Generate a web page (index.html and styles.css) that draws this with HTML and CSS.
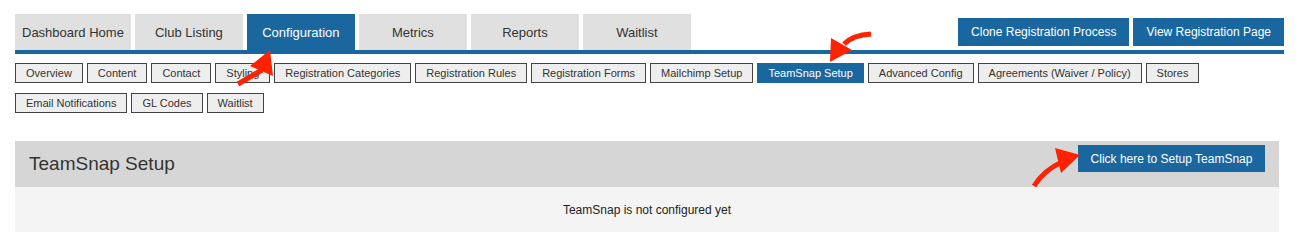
FILE: index.html
```html
<!DOCTYPE html>
<html lang="en">
<head>
    <meta charset="UTF-8">
    <title>TeamSnap Setup</title>
    <link rel="stylesheet" href="styles.css">
</head>
<body>
    <div class="page">
        <div class="topbar">
            <nav class="tabs">
                <a class="tab">Dashboard Home</a>
                <a class="tab">Club Listing</a>
                <a class="tab active">Configuration</a>
                <a class="tab">Metrics</a>
                <a class="tab">Reports</a>
                <a class="tab">Waitlist</a>
            </nav>
            <div class="actions">
                <button class="btn">Clone Registration Process</button>
                <button class="btn">View Registration Page</button>
            </div>
        </div>

        <div class="subtabs">
            <a class="sub">Overview</a>
            <a class="sub">Content</a>
            <a class="sub">Contact</a>
            <a class="sub">Styling</a>
            <a class="sub">Registration Categories</a>
            <a class="sub">Registration Rules</a>
            <a class="sub">Registration Forms</a>
            <a class="sub">Mailchimp Setup</a>
            <a class="sub active">TeamSnap Setup</a>
            <a class="sub">Advanced Config</a>
            <a class="sub">Agreements (Waiver / Policy)</a>
            <a class="sub">Stores</a>
            <a class="sub">Email Notifications</a>
            <a class="sub">GL Codes</a>
            <a class="sub">Waitlist</a>
        </div>

        <section class="panel">
            <div class="panel-head">
                <h2>TeamSnap Setup</h2>
                <button class="btn setup-btn">Click here to Setup TeamSnap</button>
            </div>
            <div class="panel-body">TeamSnap is not configured yet</div>
        </section>

        <!-- annotation arrows drawn over the screenshot -->
        <svg class="arrows" width="1303" height="249" viewBox="0 0 1303 249">
            <g fill="none" stroke="#ff2200" stroke-width="5" stroke-linecap="butt">
                <path d="M238,84 Q250,77 262,70"/>
                <path d="M844,44 Q853,35 871,34"/>
                <path d="M1034,186 Q1044,170 1062,162"/>
            </g>
            <g fill="#ff2200">
                <polygon points="270,50 250,66 273,76"/>
                <polygon points="831,38 852,50 830,62"/>
                <polygon points="1055,148 1080,155 1061,173"/>
            </g>
        </svg>
    </div>
</body>
</html>
```

FILE: styles.css
```css
body {
    margin: 0;
    font-family: "Liberation Sans", Arial, sans-serif;
    color: #333;
    background: white;
}
.page {
    position: relative;
    padding: 14px 19px 0 15px;
}
.topbar {
    display: flex;
    justify-content: space-between;
    border-bottom: 4px solid #1a67a0;
}
.tabs {
    display: flex;
    gap: 4px;
}
.tab {
    box-sizing: border-box;
    min-width: 108px;
    height: 36px;
    padding: 0 7px;
    display: flex;
    align-items: center;
    justify-content: center;
    background: #e0e0e0;
    color: #333;
    font-size: 13px;
}
.tab.active {
    background: #1a67a0;
    color: white;
}
.actions {
    display: flex;
    gap: 4px;
    padding-top: 4px;
}
.btn {
    border: none;
    background: #1a67a0;
    color: white;
    font-family: inherit;
    font-size: 12px;
    height: 28px;
    padding: 0 13px;
}
.subtabs {
    display: flex;
    flex-wrap: wrap;
    gap: 10px 4px;
    margin-top: 9px;
    width: 1200px;
}
.sub {
    box-sizing: border-box;
    height: 20px;
    padding: 0 10px;
    display: flex;
    align-items: center;
    border: 1px solid #444;
    background: #eeeeee;
    font-size: 11px;
    color: #333;
}
.sub.active {
    background: #1a67a0;
    border-color: #1a67a0;
    color: white;
}
.panel {
    margin-top: 28px;
    width: 1264px;
}
.panel-head {
    height: 46px;
    background: #d6d6d6;
    display: flex;
    align-items: center;
    justify-content: space-between;
    padding: 0 14px;
}
.panel-head h2 {
    margin: 0;
    font-weight: normal;
    font-size: 19px;
    color: #333;
}
.setup-btn {
    width: 187px;
    height: 27px;
    padding: 0;
    margin-top: -11px;
}
.panel-body {
    height: 45px;
    background: #f4f4f4;
    display: flex;
    align-items: center;
    justify-content: center;
    font-size: 12px;
    color: #222;
}
.arrows {
    position: absolute;
    left: 0;
    top: 0;
    pointer-events: none;
}
```
